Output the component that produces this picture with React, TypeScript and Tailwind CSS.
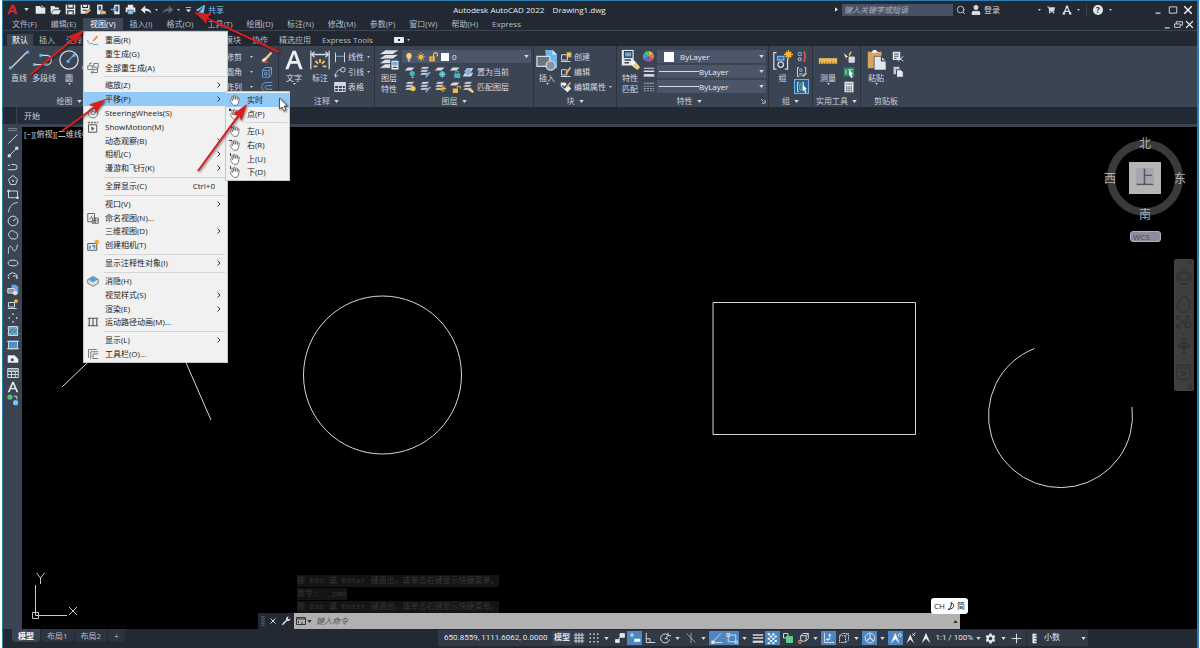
import type { ReactNode } from "react";
import { FaPaperPlane, FaShoppingCart, FaUser } from "react-icons/fa";
import { FiSearch } from "react-icons/fi";
import { IoSettingsSharp } from "react-icons/io5";

type SvgProps = { children: ReactNode; className?: string };

const Small = ({ children, className = "size-[12px]" }: SvgProps) => (
  <svg viewBox="0 0 16 16" className={`${className} shrink-0`} fill="none" stroke="#d5d9e0" strokeWidth="1.3">
    {children}
  </svg>
);

const Big = ({ children }: SvgProps) => (
  <svg viewBox="0 0 24 24" className="size-[22px] shrink-0" fill="none" stroke="#d5d9e0" strokeWidth="1.4">
    {children}
  </svg>
);

const Caret = ({ className = "" }: { className?: string }) => (
  <svg viewBox="0 0 6 4" className={`h-[3px] w-[5px] shrink-0 ${className}`}>
    <path d="M0 0h6L3 4z" fill="#d5d9e0" />
  </svg>
);

const Dot = () => (
  <svg viewBox="0 0 4 3" className="h-[2px] w-[3px] shrink-0">
    <path d="M0 0h4L2 3z" fill="#d5d9e0" />
  </svg>
);

const Layers = ({ children }: { children?: ReactNode }) => (
  <Small>
    <path d="M5 1h9l-3 3H2zM4 5h9l-3 3H1zM4 9h9l-3 3H1z" fill="#d9dce2" stroke="#3b4453" strokeWidth=".6" />
    {children}
  </Small>
);

const Sheet = ({ children }: { children?: ReactNode }) => (
  <Small>
    <path d="M5 2h9l-4 4H1z" fill="#d9dce2" stroke="none" />
    {children}
  </Small>
);

const Bulb = ({ className }: { className?: string }) => (
  <Small className={className}>
    <path d="M8 1a5 5 0 0 0-2.5 9v2h5v-2A5 5 0 0 0 8 1z" fill="#ffd06b" stroke="none" />
    <path d="M6 13.5h4M7 15h2" />
  </Small>
);

const Sun = ({ className }: { className?: string }) => (
  <Small className={className}>
    <circle cx="8" cy="8" r="3.8" fill="#f7b843" stroke="none" />
    <path d="M8 1v14M1 8h14M3 3l10 10M13 3 3 13" stroke="#f7b843" />
  </Small>
);

const Unlock = ({ className }: { className?: string }) => (
  <Small className={className}>
    <path d="M2 7h9v8H2z" fill="#f7b843" stroke="none" />
    <path d="M9 7V4a3 3 0 0 1 6 0v3" stroke="#f7c871" strokeWidth="1.8" />
    <path d="M6.500 9v4" stroke="#3b4453" />
  </Small>
);

const quickTools = [
  {
    label: "新建",
    icon: <path d="M1 3h6l2 2h6v9H1z M8 3l2-1 3 3" fill="#e4e6ea" stroke="none" />,
  },
  {
    label: "打开",
    icon: <path d="M1 3h5l2 2h5v3H5l-3 5H1zM5 9h11l-3 6H2z" fill="#e4e6ea" stroke="none" />,
  },
  {
    label: "保存",
    icon: (
      <>
        <path d="M1 1h14v14H1z" fill="#e4e6ea" stroke="none" />
        <path d="M4 1v5h8V1M4 15v-5h8v5" stroke="#222933" strokeWidth="1.500" />
      </>
    ),
  },
  {
    label: "另存为",
    icon: (
      <>
        <path d="M1 1h13v8l-6 5H1z" fill="#e4e6ea" stroke="none" />
        <path d="M4 1v4h7V1M4 9h6" stroke="#222933" strokeWidth="1.500" />
        <path d="m8 15 1-3 5-5 2 2-5 5z" fill="#f2b65a" stroke="#222933" strokeWidth=".6" />
      </>
    ),
  },
  {
    label: "从移动设备打开",
    icon: (
      <>
        <path d="M3 1h8v14H3z" fill="#e4e6ea" stroke="none" />
        <path d="M5 3h4v6H5z" fill="#4a5468" stroke="none" />
        <path d="M9 9h3l1 1h3v5H8z" fill="#e9b566" stroke="#222933" strokeWidth=".6" />
      </>
    ),
  },
  {
    label: "保存到移动设备",
    icon: (
      <>
        <path d="M6 1h8v14H6z" fill="#e4e6ea" stroke="none" />
        <path d="M8 3h4v8H8z" fill="#4a5468" stroke="none" />
        <path d="M1 8h6M5 5l3 3-3 3" stroke="#5fb4ee" strokeWidth="2" />
      </>
    ),
  },
  {
    label: "打印",
    icon: (
      <>
        <path d="M4 1h8v4H4zM1 5h14v7H1z" fill="#e4e6ea" stroke="none" />
        <path d="M4 9h8v6H4z" fill="#8fc5ef" stroke="#222933" strokeWidth=".8" />
      </>
    ),
  },
];

const menuBar = [
  "文件(F)",
  "编辑(E)",
  "视图(V)",
  "插入(I)",
  "格式(O)",
  "工具(T)",
  "绘图(D)",
  "标注(N)",
  "修改(M)",
  "参数(P)",
  "窗口(W)",
  "帮助(H)",
  "Express",
];

const ribbonTabs = [
  "默认",
  "插入",
  "注释",
  "参数化",
  "视图",
  "管理",
  "输出",
  "附加模块",
  "协作",
  "精选应用",
  "Express Tools",
];

const TitleBar = () => (
  <header className="flex h-[17px] items-center pl-[2px] pr-[2px]">
    <button aria-label="应用程序" className="flex h-full w-[15px] items-center justify-center">
      <svg viewBox="0 0 16 16" className="size-[11px]">
        <path d="M6.500 1h4l5 14h-4l-1-3H5l-1 3H.5zM8 5 6.200 9.500h3.600z" fill="#d8262e" fillRule="evenodd" />
      </svg>
    </button>
    <div className="flex w-[13px] items-center justify-center">
      <Caret />
    </div>
    {quickTools.map((tool) => (
      <button key={tool.label} aria-label={tool.label} className="flex w-[15px] justify-center">
        <Small className="size-[11px]">{tool.icon}</Small>
      </button>
    ))}
    <button aria-label="放弃" className="flex w-[15px] justify-center">
      <Small>
        <path d="M7 2v4c5 0 8 3 8 7-2-3-4-4-8-4v4L1 7.500z" fill="#e4e6ea" stroke="none" />
      </Small>
    </button>
    <div className="flex w-[7px] justify-center">
      <Dot />
    </div>
    <button aria-label="重做" className="flex w-[15px] justify-center">
      <Small>
        <path d="M9 2v4c-5 0-8 3-8 7 2-3 4-4 8-4v4l6-5.500z" fill="#5d6573" stroke="none" />
      </Small>
    </button>
    <div className="flex w-[7px] justify-center">
      <Dot />
    </div>
    <button aria-label="自定义快速访问工具栏" className="flex w-[12px] justify-center">
      <svg viewBox="0 0 8 8" className="size-[7px]">
        <path d="M1 1h6v1H1zM1 4h6L4 7z" fill="#e4e6ea" />
      </svg>
    </button>
    <button className="flex items-center gap-[3px] pl-[2px] text-[#7cc0ee]">
      <FaPaperPlane size={9} />
      共享
    </button>
    <h1 className="flex-1 whitespace-pre text-center text-[#e8eaee]">{"Autodesk AutoCAD 2022    Drawing1.dwg"}</h1>
    <svg viewBox="0 0 4 6" className="mr-[4px] h-[5px] w-[3px]">
      <path d="M0 0v6l4-3z" fill="#e4e6ea" />
    </svg>
    <input
      aria-label="搜索"
      placeholder="键入关键字或短语"
      className="h-[12px] w-[111px] bg-[#4a5166] px-[2px] italic placeholder:text-[#a9afbb]"
    />
    <button aria-label="查找" className="flex w-[16px] justify-center">
      <FiSearch size={10} />
    </button>
    <button className="flex items-center gap-[3px] pl-[2px]">
      <FaUser size={10} />
      登录
    </button>
    <div className="ml-[36px] flex w-[7px] justify-center">
      <Dot />
    </div>
    <button aria-label="购物车" className="flex w-[16px] justify-center">
      <FaShoppingCart size={8} />
    </button>
    <button aria-label="应用商店" className="flex w-[15px] justify-center">
      <Small className="size-[10px]">
        <path d="M8 2 3 13M8 2l5 11M5 10h6" strokeWidth="2" />
        <path d="M1 12h4v3H1zM11 12h4v3h-4zM6 1h4v3H6z" fill="#e4e6ea" stroke="none" />
      </Small>
    </button>
    <div className="flex w-[9px] justify-center">
      <Dot />
    </div>
    <div className="mx-[3px] h-[12px] w-px bg-[#3b4453]" />
    <button aria-label="帮助" className="ml-[3px] flex size-[10px] items-center justify-center rounded-full bg-[#e4e6ea] font-bold text-[#222933]">
      ?
    </button>
    <div className="ml-[3px] flex w-[9px] justify-center">
      <Dot />
    </div>
    <div className="ml-[35px] flex">
      <button aria-label="最小化" className="flex w-[15px] justify-center">
        <Small className="size-[10px]">
          <path d="M4 13h8" strokeWidth="2" />
        </Small>
      </button>
      <button aria-label="最大化" className="flex w-[15px] justify-center">
        <Small className="size-[10px]">
          <path d="M2 3h12v10H2z" strokeWidth="1.500" />
        </Small>
      </button>
      <button aria-label="关闭" className="flex w-[15px] justify-center">
        <Small className="size-[10px]">
          <path d="m2 2 12 12M14 2 2 14" strokeWidth="2.200" stroke="#fff" />
        </Small>
      </button>
    </div>
  </header>
);

const MenuBar = () => (
  <div className="flex h-[13px] items-stretch border-b border-[#3b4453] pl-[2px] pr-[2px] text-[#b9bec8]">
    <nav className="flex">
      {menuBar.map((item) => (
        <button
          key={item}
          className={`flex items-center px-[7px] ${item === "视图(V)" ? "bg-[#3f4959] text-white" : ""}`}
        >
          {item}
        </button>
      ))}
    </nav>
    <div className="ml-auto flex items-center">
      <button aria-label="最小化图形" className="flex w-[11px] justify-center">
        <Small className="size-[9px]">
          <path d="M3 14h9" strokeWidth="2" />
        </Small>
      </button>
      <button aria-label="还原图形" className="flex w-[11px] justify-center">
        <Small className="size-[9px]">
          <path d="M1 7h10v6H1zM4 7V3h11v6h-4" strokeWidth="1.600" />
        </Small>
      </button>
      <button aria-label="关闭图形" className="flex w-[11px] justify-center">
        <Small className="size-[9px]">
          <path d="m2 2 12 12M14 2 2 14" strokeWidth="2.200" stroke="#fff" />
        </Small>
      </button>
    </div>
  </div>
);

const RibbonTabs = () => (
  <div className="flex h-[15px] items-end gap-px pl-[4px] text-[#b9bec8]">
    {ribbonTabs.map((tab, i) => (
      <button
        key={tab}
        className={`flex h-[12px] items-center px-[5px] ${i === 0 ? "bg-[#3b4453] text-white" : ""}`}
      >
        {tab}
      </button>
    ))}
    <button aria-label="最小化功能区" className="ml-[15px] flex h-[12px] items-center gap-[3px]">
      <span className="flex h-[6px] w-[10px] items-center justify-center rounded-[1px] bg-[#e8eaee]">
        <span className="size-[2px] bg-[#222933]" />
      </span>
      <Dot />
    </button>
  </div>
);

type PanelProps = { title: string; width: string; caret?: boolean; corner?: boolean; children: ReactNode };

const Panel = ({ title, width, caret = true, corner, children }: PanelProps) => (
  <section className={`flex shrink-0 flex-col border-r border-[#2b323e] ${width}`}>
    <div className="flex h-[49px] items-start px-[2px] pt-[3px]">{children}</div>
    <footer className="flex h-[12px] items-center text-[#c9cdd5]">
      <span className="flex flex-1 items-center justify-center gap-[4px]">
        {title}
        {caret && <Caret />}
      </span>
      {corner && (
        <svg viewBox="0 0 6 6" className="mr-[2px] size-[5px]">
          <path d="m0 0 3 3M5 1v4H1" stroke="#d5d9e0" fill="none" />
        </svg>
      )}
    </footer>
  </section>
);

type BigButtonProps = { label: string; second?: string; width?: string; caret?: boolean; icon: ReactNode };

const BigButton = ({ label, second, width = "w-[22px]", caret, icon }: BigButtonProps) => (
  <button className={`flex shrink-0 flex-col items-center whitespace-nowrap ${width}`}>
    <Big>{icon}</Big>
    <span className="mt-px leading-[11px]">{label}</span>
    {second && <span className="leading-[11px]">{second}</span>}
    {caret && <Dot />}
  </button>
);

const Row = ({ icon, label, caret }: { icon: ReactNode; label: string; caret?: boolean }) => (
  <button className="flex h-[15px] items-center gap-[2px] whitespace-nowrap">
    {icon}
    {label}
    {caret && (
      <span className="ml-px">
        <Dot />
      </span>
    )}
  </button>
);

const Cell = ({ label, children }: { label: string; children: ReactNode }) => (
  <button aria-label={label} className="flex size-[15px] items-center justify-center">
    {children}
  </button>
);

const modifyRows = [
  {
    label: "修剪",
    icon: (
      <>
        <path d="m5 9 8-8 2 2-7 8z" fill="#f0c48c" stroke="none" />
        <path d="m2 11 3-2 3 2-3 3H1z" fill="#f4f4f4" stroke="none" />
        <path d="M2 15h8" stroke="#e05a48" />
      </>
    ),
  },
  {
    label: "圆角",
    icon: <path d="M2 6h9v9H2zM2 6l3-4h9v9l-3 4M11 6l3-4M5 9h3v3H5z" stroke="#6b9bd0" />,
  },
  {
    label: "阵列",
    icon: <path d="M15 2H7a6 6 0 0 0 0 12h8M15 6H8a2.500 2.500 0 0 0 0 5h7" stroke="#6b9bd0" />,
  },
];

const selectClass = "min-w-0 flex-1 appearance-none bg-transparent text-[#e8eaee] outline-none";

const Ribbon = () => (
  <div className="flex h-[61px] bg-[#3b4453] text-[#d5d9e0]">
    <Panel title="绘图" width="w-[133px]">
      <div className="flex gap-px pl-[3px]">
        <BigButton
          label="直线"
          icon={
            <>
              <path d="M3 21 21 3" />
              <path d="M1 19h3v3H1zM20 2h3v3h-3z" fill="#6fb2ec" stroke="none" />
            </>
          }
        />
        <BigButton
          label="多段线"
          width="w-[26px]"
          icon={
            <>
              <path d="M2 17h13a5 5 0 0 0 0-10H9" />
              <path d="M0 15.500h3v3H0zM13 15.500h3v3h-3zM7 5.500h3v3H7z" fill="#6fb2ec" stroke="none" />
            </>
          }
        />
        <BigButton
          label="圆"
          caret
          icon={
            <>
              <circle cx="12" cy="12" r="10" />
              <path d="m11 13 6-6" stroke="#6fb2ec" />
              <path d="M9.500 12h3v3h-3zM16 5.500h3v3h-3z" fill="#6fb2ec" stroke="none" />
            </>
          }
        />
        <BigButton label="圆弧" caret icon={<path d="M2 22C3 10 10 3 22 2" />} />
      </div>
    </Panel>
    <Panel title="修改" width="w-[143px]">
      <div className="ml-auto flex flex-col pr-[3px]">
        {modifyRows.map((row) => (
          <div key={row.label} className="flex h-[15px] items-center gap-[8px]">
            <button className="flex items-center gap-[8px]">
              {row.label}
              <Dot />
            </button>
            <Small>{row.icon}</Small>
          </div>
        ))}
      </div>
    </Panel>
    <Panel title="注释" width="w-[96px]">
      <BigButton
        label="文字"
        width="w-[26px]"
        caret
        icon={
          <path
            d="M10.500 2h3.500l7.500 20h-3.500l-2.200-6H8.200L6 22H2.500zM12 5.500 9.200 13.200h5.600z"
            fill="#eceef1"
            stroke="none"
            fillRule="evenodd"
          />
        }
      />
      <BigButton
        label="标注"
        width="w-[26px]"
        icon={
          <>
            <path d="M2 2v20M22 2v20M3 6h18M6 3 3 6l3 3M18 3l3 3-3 3" />
            <path d="M12 11v4M7 13l3 3M17 13l-3 3M5 19h4M15 19h4" stroke="#f7c45c" strokeWidth="2" />
          </>
        }
      />
      <div className="ml-px">
        <Row label="线性" caret icon={<Small><path d="M2 2v13M14 2v13" /><path d="M3 7h10" stroke="#6fb2ec" /></Small>} />
        <Row
          label="引线"
          caret
          icon={
            <Small>
              <path d="M2 14C2 8 5 5 9 5M9 5a3 3 0 1 0 6 0 3 3 0 1 0-6 0M1 11l1 4 3-3" />
            </Small>
          }
        />
        <Row
          label="表格"
          icon={
            <Small>
              <path d="M1 2h14v12H1zM1 6h14M1 10h14M6 6v8M11 6v8" />
              <path d="M1 2h14v3H1z" fill="#d5d9e0" />
            </Small>
          }
        />
      </div>
    </Panel>
    <Panel title="图层" width="w-[159px]">
      <BigButton
        label="图层"
        second="特性"
        width="w-[24px]"
        icon={
          <>
            <path d="M8 1h15l-7 5H1zM8 6h15l-7 5H1zM8 11h15l-7 5H1zM8 16h15l-7 5H1z" fill="#dfe2e7" stroke="#3b4453" strokeWidth=".8" />
            <path d="M14 12h9v11h-9z" fill="#f4f5f7" stroke="#3b4453" />
            <path d="M15.500 14h6v4h-6z" fill="#66aeea" stroke="none" />
            <path d="M16 20h5" stroke="#556" />
          </>
        }
      />
      <div className="flex flex-1 flex-col pl-px">
        <div className="mt-px flex h-[13px] items-center bg-[#4b566b] pl-[2px] pr-[2px]">
          <Bulb className="size-[10px]" />
          <Sun className="mx-[2px] size-[10px]" />
          <Unlock className="size-[10px]" />
          <span className="mx-[3px] size-[8px] bg-white" />
          <select aria-label="图层" className={selectClass}>
            <option>0</option>
          </select>
          <Caret />
        </div>
        <div className="mt-px flex h-[15px] items-center whitespace-nowrap">
          <Cell label="关"><Sheet><circle cx="11" cy="10" r="3.500" fill="#3fb7c4" stroke="none" /><path d="M10 15h3" /></Sheet></Cell>
          <Cell label="隔离"><Layers><path d="m9 15 6-7" stroke="#6fb2ec" strokeWidth="2" /></Layers></Cell>
          <Cell label="冻结"><Sheet><circle cx="11" cy="11" r="4" fill="#3fa9c4" stroke="none" /><path d="M11 7v8M7 11h8" stroke="#8fd6e4" /></Sheet></Cell>
          <Cell label="锁定"><Sheet><path d="M7 10h8v6H7z" fill="#3fb7c4" stroke="none" /><path d="M9 10V7h4v3" stroke="#3fb7c4" /></Sheet></Cell>
          <button className="flex items-center gap-[3px]">
            <Small>
              <path d="M6 3h9l-3 5H3zM4 9h11l-3 5H1z" fill="#cfd9e6" stroke="none" />
              <circle cx="8" cy="8" r="4" fill="#7fb2de" stroke="none" />
            </Small>
            置为当前
          </button>
        </div>
        <div className="flex h-[15px] items-center whitespace-nowrap">
          <Cell label="打开所有图层"><Layers><circle cx="12" cy="10" r="3.500" fill="#f7c45c" stroke="none" /></Layers></Cell>
          <Cell label="取消隔离"><Layers><path d="m9 15 6-7" stroke="#6fb2ec" strokeWidth="2" /></Layers></Cell>
          <Cell label="解冻"><Layers><path d="M12 6v9M8 10h8M9 7l6 6M15 7l-6 6" stroke="#f7b843" /></Layers></Cell>
          <Cell label="解锁"><Sheet><path d="M5 10h7v6H5z" fill="#f7b843" stroke="none" /><path d="M11 10V7h4v3" stroke="#f7b843" /></Sheet></Cell>
          <button className="flex items-center gap-[3px]">
            <Layers><path d="m8 12 3-3 5 5-2 2z" fill="#f3d27c" stroke="none" /></Layers>
            匹配图层
          </button>
        </div>
      </div>
    </Panel>
    <Panel title="块" width="w-[83px]">
      <BigButton
        label="插入"
        width="w-[22px]"
        caret
        icon={
          <>
            <path d="M10 1h8l5 5v15H12z" fill="#6fb6ee" stroke="none" />
            <path d="M18 1v5h5" fill="#cfe6fa" stroke="none" />
            <path d="M1 8h14v11H1z" fill="#6d7584" />
            <circle cx="16" cy="18" r="5" fill="#8a92a0" />
          </>
        }
      />
      <div className="ml-[2px]">
        <Row label="创建" icon={<Small><path d="M2 5h8v7H2zM1 14h13" /><path d="M12 1v8M8 5h8M9 2l6 6M15 2 9 8" stroke="#f7c45c" strokeWidth="1.500" /></Small>} />
        <Row label="编辑" icon={<Small><path d="M2 5h7v7H2zM1 14h13" /><path d="m8 10 6-8" stroke="#f0b060" strokeWidth="2.500" /></Small>} />
        <Row
          label="编辑属性"
          caret
          icon={
            <Small>
              <path d="M1 2h6l8 8-5 5-9-8z" fill="#e8eaee" stroke="none" />
              <path d="m3 6 3 3 7-8" stroke="#3b4453" strokeWidth="2" />
              <path d="m9 8 5-6" stroke="#f0b060" strokeWidth="2" />
            </Small>
          }
        />
      </div>
    </Panel>
    <Panel title="特性" width="w-[152px]" corner>
      <BigButton
        label="特性"
        second="匹配"
        width="w-[22px]"
        icon={
          <>
            <path d="M3 1h13v17H3z" fill="#e4e6ea" stroke="none" />
            <path d="M6 3h8v6H6z" fill="#66aeea" stroke="#3b4453" />
            <path d="M6 12h7M6 15h5" stroke="#3b4453" />
            <path d="m12 15 4-3 3 3-4 4z" fill="#f4f5f7" stroke="none" />
            <path d="m15 19 4-4 4 5-3 3z" fill="#f3d27c" stroke="none" />
          </>
        }
      />
      <div className="ml-[2px] flex w-[14px] flex-col">
        <div className="flex h-[15px] items-center">
          <svg viewBox="0 0 16 16" className="size-[11px]">
            <path d="M8 8V0a8 8 0 0 1 7 4z" fill="#e8b93a" />
            <path d="m8 8 7-4a8 8 0 0 1 0 8z" fill="#ef7b34" />
            <path d="m8 8 7 4a8 8 0 0 1-7 4z" fill="#d8418c" />
            <path d="M8 8v8a8 8 0 0 1-7-4z" fill="#7a57d0" />
            <path d="m8 8-7 4a8 8 0 0 1 0-8z" fill="#36a3e0" />
            <path d="M8 8 1 4a8 8 0 0 1 7-4z" fill="#5cc15a" />
          </svg>
        </div>
        <div className="flex h-[15px] items-center">
          <Small><path d="M1 3h14" /><path d="M1 7h14" strokeWidth="2" /><path d="M1 12.500h14" strokeWidth="3.500" /></Small>
        </div>
        <div className="flex h-[15px] items-center">
          <Small><path d="M1 3h14" stroke="#98a0ad" /><path d="M1 7h14M1 10h14M1 13h14" strokeDasharray="3 1" stroke="#98a0ad" /></Small>
        </div>
      </div>
      <div className="flex flex-1 flex-col gap-[2px] pt-px">
        <div className="flex h-[13px] items-center bg-[#4b566b] pl-[7px] pr-[2px]">
          <span className="mr-[6px] size-[10px] bg-white" />
          <select aria-label="颜色" className={selectClass}>
            <option>ByLayer</option>
          </select>
          <Caret />
        </div>
        {["线宽", "线型"].map((name) => (
          <div key={name} className="flex h-[13px] items-center bg-[#4b566b] pl-[2px] pr-[2px]">
            <span className="h-px w-[40px] bg-[#d5d9e0]" />
            <select aria-label={name} className={selectClass}>
              <option>ByLayer</option>
            </select>
            <Caret />
          </div>
        ))}
      </div>
    </Panel>
    <Panel title="组" width="w-[44px]">
      <BigButton
        label="组"
        width="w-[23px]"
        icon={
          <>
            <path d="M5 4H2v18h3M17 10v12h-3" />
            <path d="M6 8h7v4H6z" stroke="#6fb2ec" fill="#3f6d9c" />
            <circle cx="9.500" cy="17" r="3" />
            <circle cx="18" cy="6" r="3" fill="#f7b843" stroke="none" />
            <path d="M18 1v10M13 6h10M15 3l6 6M21 3l-6 6" stroke="#f7b843" />
          </>
        }
      />
      <div className="flex flex-col">
        <Cell label="解除编组"><Small><path d="M3 2h4v4H3z" stroke="#6fb2ec" /><circle cx="5" cy="11" r="2" /><path d="M10 1c3 0 0 6 3 6-3 0 0 7-3 7" stroke="#e05a68" strokeWidth="2" /></Small></Cell>
        <Cell label="组编辑"><Small><path d="M4 2H2v12h2M11 2h2v6" /><path d="M5 4h3v3H5zM5 10h3v3H5z" stroke="#6fb2ec" /><path d="m9 14 5-5" stroke="#f0a860" strokeWidth="2.500" /></Small></Cell>
        <button aria-label="组选择" className="flex size-[15px] items-center justify-center border border-[#6fb2ec] bg-[#2f5f8c]">
          <Small><path d="M4 2H2v12h2M8 2h2v5" /><path d="M5 4h3v8H5z" stroke="#54c78a" /><path d="m9 5 6 6h-3l2 4-2 1-1-4-2 2z" fill="#fff" stroke="none" /></Small>
        </button>
      </div>
    </Panel>
    <Panel title="实用工具" width="w-[48px]">
      <BigButton
        label="测量"
        width="w-[26px]"
        caret
        icon={
          <>
            <path d="M2 10h20v6H2z" fill="#f0bd55" stroke="none" />
            <path d="M4 16v-3M7 16v-2M10 16v-3M13 16v-2M16 16v-3M19 16v-2" stroke="#8a6420" strokeWidth=".8" />
          </>
        }
      />
      <div className="flex flex-col">
        <Cell label="快速选择"><Small><path d="M5 8h4v6h6V8z" fill="#e8eaee" stroke="none" /><path d="m1 3 6 5H4l1 4z" fill="#fff" stroke="none" /><path d="M8 8h7v7H8z" fill="#d5d9e0" /><path d="m8 6 3-5" stroke="#f7b843" strokeWidth="2" /></Small></Cell>
        <Cell label="全部选择"><Small><path d="M1 2h14v12H1z" fill="#2e8d63" stroke="none" /><path d="M4 5v6M7 5h6" /><path d="m8 5 6 6h-3l2 4-2 1-3-5z" fill="#fff" stroke="none" /></Small></Cell>
        <Cell label="计算器"><Small><path d="M2 1h12v14H2z" fill="#e4e6ea" stroke="none" /><path d="M4 4h8M4 8h8M4 10.500h8M4 13h8" stroke="#3b4453" strokeDasharray="2 1" /></Small></Cell>
      </div>
    </Panel>
    <section className="flex w-[50px] shrink-0 flex-col">
      <div className="flex h-[49px] items-start pl-[3px] pt-[3px]">
        <BigButton
          label="粘贴"
          width="w-[24px]"
          caret
          icon={
            <>
              <path d="M3 3h15v18H3z" fill="#d9a55a" stroke="none" />
              <path d="M7 4h7L12 1H9z" fill="#f4f5f7" stroke="none" />
              <path d="M10 8h8l5 5v10H10z" fill="#e4e6ea" stroke="#3b4453" strokeWidth=".8" />
              <path d="M18 8v5h5" stroke="#3b4453" />
            </>
          }
        />
        <div className="ml-[2px] flex flex-col">
          <Cell label="剪切"><Small><path d="M1 1h10v11H1z" fill="#e4e6ea" stroke="none" /><path d="M3 4h6M3 7h6M3 10h3" stroke="#3b4453" /><path d="m8 7 7 7M15 7l-7 7" /></Small></Cell>
          <Cell label="复制"><Small><path d="M2 1h8v10H2z" fill="#c3c8d0" stroke="none" /><path d="M6 5h6l3 3v7H6z" fill="#e8eaee" stroke="#3b4453" /></Small></Cell>
        </div>
      </div>
      <footer className="flex h-[12px] items-center justify-center text-[#c9cdd5]">剪贴板</footer>
    </section>
  </div>
);

const drawTools = [
  { label: "直线", icon: <path d="M2 14 14 2" /> },
  { label: "构造线", icon: <><path d="M2 14 14 2" /><path d="M1 11h4v4H1zM11 1h4v4h-4z" fill="#d5d9e0" stroke="none" /></> },
  { label: "多段线", icon: <path d="M1 13h9a3 3 0 0 0 0-7H6M1 7h3" /> },
  { label: "多边形", icon: <><path d="m8 2 6 5-2.500 7h-7L2 7z" /><circle cx="8" cy="9" r="1" /></> },
  { label: "矩形", icon: <><path d="M2 4h12v9H2z" /><path d="M1 3h2v2H1zM13 12h2v2h-2z" fill="#d5d9e0" /></> },
  { label: "圆弧", icon: <path d="M2 15C3 7 7 3 14 2" /> },
  { label: "圆", icon: <><circle cx="8" cy="8" r="6.500" /><path d="m8 8 4-3" /></> },
  { label: "修订云线", icon: <path d="M3 5a4 4 0 0 1 7-1 4 4 0 0 1 4 5 4 4 0 0 1-6 4 3 3 0 0 1-4-2 4 4 0 0 1-1-6z" /> },
  { label: "样条曲线", icon: <path d="M2 14C1 4 5 2 7 7s5 6 7-5" /> },
  { label: "椭圆", icon: <ellipse cx="8" cy="8" rx="6.500" ry="3.800" /> },
  { label: "椭圆弧", icon: <path d="M3 12a6 5 0 1 1 10-1M8 8h5v4" /> },
  { label: "插入块", icon: <><path d="M6 1h6l3 3v9H6z" fill="#5fa8e6" stroke="none" /><path d="M1 6h9v6H1z" fill="#8a92a0" /><circle cx="11" cy="12" r="2.500" fill="#e4e6ea" /></> },
  { label: "创建块", icon: <><path d="M2 6h8v6H2zM1 14h12" /><circle cx="12" cy="4" r="2.500" fill="#f7b843" stroke="none" /></> },
  { label: "点", icon: <path d="M7 2h2v2H7zM2 7h2v2H2zM12 7h2v2h-2zM7 12h2v2H7z" fill="#d5d9e0" stroke="none" /> },
  { label: "图案填充", icon: <><path d="M2 2h12v12H2z" fill="#4c86a8" /><path d="m2 8 6-6M2 14 14 2M8 14l6-6M0 4h16M0 12h16" stroke="#a8d0e4" strokeWidth=".8" /></> },
  { label: "渐变色", icon: <><path d="M2 3h12v10H2z" fill="#4a8fd0" /><path d="M0 3h16M0 13h16" /></> },
  { label: "面域", icon: <><path d="M1 3h9l5 5v5H1z" fill="#eef0f3" stroke="none" /><circle cx="7" cy="9" r="2" fill="#3b4453" stroke="none" /></> },
  { label: "表格", icon: <path d="M1 2h14v12H1zM1 4h14M1 6h14M1 10h14M6 6v8M11 6v8" /> },
  { label: "多行文字", icon: <path d="M7 1h2l6 14h-2.400l-1.500-4H4.900l-1.500 4H1zM8 4 5.700 9.200h4.600z" fill="#eceef1" stroke="none" fillRule="evenodd" /> },
  { label: "添加选定对象", icon: <><circle cx="4" cy="4" r="3.500" fill="#4fc37e" stroke="none" /><circle cx="11.500" cy="11.500" r="3.500" fill="#7cc4f0" stroke="none" /><path d="M9 3h4v4" /></> },
];

const DrawToolbar = () => (
  <aside className="w-[19px] shrink-0 bg-[#3b4453]">
    <div className="mx-auto mt-px h-[3px] w-[9px] border-y border-[#7a8290]" />
    <div className="mt-px flex h-[275px] flex-col items-center justify-between">
      {drawTools.map((tool) => (
        <button key={tool.label} aria-label={tool.label} className="flex size-[13px] items-center justify-center">
          <Small>{tool.icon}</Small>
        </button>
      ))}
    </div>
  </aside>
);

const NavigationBar = () => (
  <svg viewBox="0 0 20 132" className="h-[132px] w-[20px]" fill="none" stroke="#282828" strokeWidth=".8">
    <rect width="20" height="132" rx="2" fill="#3f3f3f" stroke="none" />
    <path d="m15 2 3 3M18 2l-3 3" />
    <circle cx="10" cy="18" r="7" />
    <path d="M6 14h8v7H6zM9 31h2M9 75h2M9 99h2" />
    <path d="M5 50c-3-4-2-6 0-5l1-5 2-1 1-2 2 1 2 0 1 3 2 1-1 7-3 4H7z" />
    <path d="m3 57 12 12M15 57 3 69M3 61v-4h4M11 57h4v4M3 65v4h4" />
    <circle cx="14" cy="66" r="3" />
    <path d="M10 79v16M3 87h14M8 81l2-2 2 2M8 93l2 2 2-2M5 85l-2 2 2 2M15 85l2 2-2 2" />
    <ellipse cx="10" cy="87" rx="4" ry="3" />
    <path d="M3 106h13v14H3zM3 109h13M8 112v5l4-2.500z" />
    <circle cx="16" cy="128" r="2" />
  </svg>
);

const ViewCube = () => (
  <div className="flex flex-col items-end">
    <svg viewBox="0 0 88 100" className="h-[100px] w-[88px] overflow-visible">
      <circle cx="44" cy="47" r="34" fill="none" stroke="#3a3a3a" strokeWidth="8" />
      <rect x="28" y="31" width="32" height="32" fill="#b5b5b5" />
      <rect x="35" y="37" width="18" height="18" fill="#a6a6ac" />
      <g fill="#b0b0b0" fontSize="12" textAnchor="middle">
        <text x="44" y="17">北</text>
        <text x="44" y="88">南</text>
        <text x="9" y="52">西</text>
        <text x="79" y="52">东</text>
        <text x="44" y="53" fontSize="18" fill="#55555f">上</text>
      </g>
    </svg>
    <button className="mr-[28px] flex h-[11px] w-[31px] items-center rounded-[3px] border border-[#b4b2c0] bg-[#8e8c9a] pl-[2px] text-[#4a4954]">
      WCS
    </button>
  </div>
);

const Drawing = () => (
  <svg className="absolute inset-0 h-full w-full" fill="none" stroke="#d8d8d8" strokeWidth="1">
    <g transform="translate(-22 -127)">
      <path d="M62 387 150 303M150 280l61 140" />
      <circle cx="382.500" cy="375" r="79" />
      <path d="M713 302.500h202.500v132H713z" />
      <path d="M1034.500 348.500A72 72 0 1 0 1132 407" />
    </g>
  </svg>
);

const UcsIcon = () => (
  <svg viewBox="0 0 50 50" className="size-[50px]" fill="none" stroke="#c8c8c8">
    <path d="M5.500 14v30.500H37M2.500 41.500h6v6h-6zM6.500 2l4 5 4-5M10.500 7v6M39 36l8 8M47 36l-8 8" />
  </svg>
);

const history = ["按 Esc 或 Enter 键退出，或单击右键显示快捷菜单。", "命令: '_pan", "按 Esc 或 Enter 键退出，或单击右键显示快捷菜单。"];

const CommandLine = () => (
  <div className="ml-[236px] mr-[237px] flex flex-col">
    <div className="flex flex-col items-start gap-px pl-[39px] font-['Liberation_Mono','Noto_Sans_CJK_SC',monospace] text-[#383838]">
      {history.map((line, i) => (
        <p key={i} className="h-[12px] bg-[#141414] leading-[12px]">
          {line}
        </p>
      ))}
    </div>
    <div className="flex h-[16px]">
      <div className="flex w-[36px] items-center gap-[4px] bg-[#222933] pl-[3px]">
        <svg viewBox="0 0 4 12" className="h-[11px] w-[4px]">
          <path d="M1 0v12M3 0v12" stroke="#8b93a1" strokeDasharray="1 1" />
        </svg>
        <Small className="size-[8px]">
          <path d="m3 3 10 10M13 3 3 13" strokeWidth="2" />
        </Small>
        <Small className="size-[10px]">
          <path d="m2 14 8-8" strokeWidth="2.500" />
          <path d="M15 4l-3 1-1-1 1-3a4 4 0 0 0-4 5l2 2a4 4 0 0 0 5-4z" fill="#d5d9e0" stroke="none" />
        </Small>
      </div>
      <div className="flex flex-1 items-center bg-[#b1b1b1] pl-[2px] pr-[2px]">
        <svg viewBox="0 0 10 8" className="h-[8px] w-[10px]" fill="none" stroke="#333">
          <path d="M.5.5h9v7h-9zM.5 2h9M2 4l1 1-1 1M5 6h2" />
        </svg>
        <svg viewBox="0 0 6 4" className="ml-px h-[3px] w-[5px]">
          <path d="M0 0h6L3 4z" fill="#333" />
        </svg>
        <input
          aria-label="命令"
          placeholder="键入命令"
          className="ml-[4px] min-w-0 flex-1 bg-transparent italic text-[#333] outline-none placeholder:text-[#555]"
        />
        <svg viewBox="0 0 6 4" className="h-[3px] w-[5px]">
          <path d="M0 4h6L3 0z" fill="#333" />
        </svg>
      </div>
    </div>
  </div>
);

const Canvas = () => (
  <main className="relative flex min-w-0 flex-1 flex-col justify-between overflow-hidden bg-black text-[#d8d8d8]">
    <Drawing />
    <p className="relative pl-[2px] pt-px leading-[12px]">[−][俯视][二维线框]</p>
    <div className="relative">
      <CommandLine />
    </div>
    <div className="absolute right-[8px] top-[4px]">
      <ViewCube />
    </div>
    <div className="absolute right-[3px] top-[132px]">
      <NavigationBar />
    </div>
    <div className="absolute bottom-[8px] left-[8px]">
      <UcsIcon />
    </div>
    <div className="absolute bottom-[15px] right-[229px] flex h-[16px] w-[37px] items-center justify-center gap-[2px] rounded-[3px] bg-white text-[#222]">
      CH
      <svg viewBox="0 0 8 8" className="size-[8px] shrink-0" fill="none" stroke="#222">
        <path d="M4 .5c4 2 4 6-3 7 2-1 4-3 3-7z" />
      </svg>
      简
    </div>
  </main>
);

type StatusItem = { label: string; on?: boolean; icon?: ReactNode };

const caretItem: StatusItem = { label: "caret" };

const statusItems: StatusItem[] = [
  { label: "栅格", icon: <path d="M4 1v14M8 1v14M12 1v14M1 4h14M1 8h14M1 12h14" /> },
  { label: "捕捉", icon: <path d="M2 3h12M2 8h12M2 13h12" strokeWidth="2" strokeDasharray="2 3" /> },
  caretItem,
  { label: "推断约束", icon: <path d="M8 2h6v5H8zM2 10h5v4H2zM7 7v3" fill="#e4e6ea" /> },
  { label: "动态输入", on: true, icon: <><path d="M1 4h6M4 1v6" strokeWidth="1.600" /><path d="M7 9h8v4H7z" fill="#fff" stroke="none" /></> },
  { label: "正交", icon: <path d="M3 1v13h12M3 9h5v5" /> },
  { label: "极轴", icon: <path d="M13 5a6 6 0 1 0 1 5M8 9l5-5M8 9h4M12 1v4h4" /> },
  caretItem,
  { label: "等轴测", icon: <path d="m2 2 12 12M8 1v14" stroke="#98a0ad" /> },
  caretItem,
  { label: "对象捕捉追踪", on: true, icon: <><path d="M2 14 13 2M2 14h13" /><path d="M1 12h3v3H1z" fill="#fff" /></> },
  { label: "对象捕捉", on: true, icon: <><path d="M3 4h10v9H3z" /><path d="M1 2h4v4H1zM12 12h3v3h-3z" /></> },
  caretItem,
  { label: "线宽", icon: <><path d="M1 4h14M1 8h14" strokeWidth="1.800" /><path d="M1 13h14" strokeWidth="3" /></> },
  { label: "透明度", on: true, icon: <path d="M1 3h12M4 6h12M1 9h12M4 12h12M1 15h12" strokeWidth="2.800" strokeDasharray="3 3" stroke="#f0f4f8" /> },
  { label: "选择循环", icon: <><path d="M2 2h6v6H2z" /><path d="M6 6h8v8H6z" fill="#5fd08c" stroke="#5fd08c" /></> },
  { label: "三维对象捕捉", icon: <><path d="M5 5h7v7H5zM5 5l3-3h7v7l-3 3M12 5l3-3" /><circle cx="4" cy="13" r="2" stroke="#f0b27a" /></> },
  caretItem,
  { label: "动态 UCS", on: true, icon: <><path d="M2 1v13h13M9 3v7H5" /><path d="m7 12-3-2 3-2zM7 5l2-3 2 3z" fill="#fff" stroke="none" /></> },
  { label: "选择过滤", icon: <path d="M2 5h8v9H2zM2 5l4-3h8v9l-4 3M10 5l4-3" strokeDasharray="2 1" /> },
  caretItem,
  { label: "小控件", on: true, icon: <><circle cx="8" cy="8" r="6.500" /><path d="M8 2v6l-5 4M8 8l5 4" strokeWidth="1.700" /></> },
  caretItem,
  { label: "注释可见性", on: true, icon: <><path d="m7 2 5 12-5-5-5 5z" fill="#fff" /><circle cx="13" cy="4" r="2" /></> },
  { label: "自动缩放", icon: <><path d="m7 3 5 12-5-5-5 5z" fill="#e4e6ea" stroke="none" /><path d="m10 5 4-4M10 2l3 3" stroke="#e4e6ea" /></> },
  { label: "注释比例", icon: <path d="m8 1 6 14-6-6-6 6z" fill="#e4e6ea" stroke="none" /> },
];

const StatusBar = () => (
  <div className="ml-auto mr-[109px] mt-px flex h-[16px] items-center bg-[#313947] font-['Roboto','Noto_Sans_CJK_SC',sans-serif] text-[#e0e3e8]">
    <span className="w-[114px] whitespace-nowrap pr-[5px] text-right">650.8559, 1111.6062, 0.0000</span>
    <button className="w-[19px] bg-[#3b4453] font-bold leading-[14px]">模型</button>
    {statusItems.map((item, i) =>
      item.icon ? (
        <button
          key={i}
          aria-label={item.label}
          className={`flex h-[14px] w-[15px] items-center justify-center ${item.on ? "bg-[#4d86c0]" : ""}`}
        >
          <Small className="size-[12px]">{item.icon}</Small>
        </button>
      ) : (
        <span key={i} className="flex w-[11px] justify-center">
          <Caret />
        </span>
      )
    )}
    <button className="flex items-center gap-[3px] whitespace-nowrap px-[2px]">
      1:1 / 100%
      <Caret />
    </button>
    <button aria-label="切换工作空间" className="flex w-[15px] justify-center">
      <IoSettingsSharp size={11} />
    </button>
    <span className="flex w-[11px] justify-center">
      <Caret />
    </span>
    <button aria-label="注释监视器" className="flex w-[15px] justify-center">
      <Small className="size-[11px]">
        <path d="M8 1v14M1 8h14" strokeWidth="1.600" />
      </Small>
    </button>
    <button className="ml-[2px] flex h-[14px] w-[62px] items-center gap-[4px] border-l border-[#222933] pl-[2px] pr-[2px]">
      <Small className="size-[11px]">
        <path d="M5 1h6v14H5z" fill="#e4e6ea" stroke="none" />
        <path d="M8 4h3M8 8h3M8 12h3" stroke="#313947" />
      </Small>
      小数
      <Caret className="ml-auto" />
    </button>
  </div>
);

const Bottom = () => (
  <footer className="flex h-[19px] bg-[#222933]">
    <nav className="flex items-start gap-px pl-[9px] text-[#b9bec8]">
      <button className="h-[13px] rounded-b-[4px] bg-[#3b4453] px-[6px] font-bold leading-[13px] text-white">模型</button>
      <button className="h-[13px] rounded-b-[4px] bg-[#2c3441] px-[6px] leading-[13px]">布局1</button>
      <button className="h-[13px] rounded-b-[4px] bg-[#2c3441] px-[6px] leading-[13px]">布局2</button>
      <button className="h-[13px] rounded-b-[4px] bg-[#2c3441] px-[6px] leading-[13px]">+</button>
    </nav>
    <StatusBar />
  </footer>
);

type MenuEntry = { label: string; more?: boolean; key?: string; icon?: ReactNode; on?: boolean } | null;

const viewMenu: MenuEntry[] = [
  { label: "重画(R)", icon: <><path d="m7 9 6-7 2 2-6 6z" fill="#e79a4a" stroke="none" /><path d="M1 8c0 5 3 6 7 4M8 14h7" stroke="#6aa0d0" /></> },
  { label: "重生成(G)" },
  { label: "全部重生成(A)", icon: <><path d="M1 5h6v5H1zM9 2h6v5H9zM8 10h6v4H8z" stroke="#777" /><path d="m3 3 3-2M5 13l3 2M14 8v2" stroke="#3fa36a" strokeWidth="2" /></> },
  null,
  { label: "缩放(Z)", more: true },
  { label: "平移(P)", more: true, on: true },
  { label: "SteeringWheels(S)", icon: <><circle cx="8" cy="8" r="6.500" stroke="#777" /><circle cx="8" cy="8" r="2.500" stroke="#777" /></> },
  { label: "ShowMotion(M)", icon: <><path d="M2 5h11v10H2z" stroke="#555" /><path d="M6 7v6l4-3z" fill="#555" stroke="none" /><path d="M1 2h14" stroke="#777" strokeWidth="2" strokeDasharray="3 1" /></> },
  { label: "动态观察(B)", more: true },
  { label: "相机(C)", more: true },
  { label: "漫游和飞行(K)", more: true },
  null,
  { label: "全屏显示(C)", key: "Ctrl+0" },
  null,
  { label: "视口(V)", more: true },
  { label: "命名视图(N)...", icon: <path d="M1 2h9v11H1zM3 10l4-5M7 8h8v7H7zM7 11h8M11 8v7" stroke="#666" /> },
  { label: "三维视图(D)", more: true },
  { label: "创建相机(T)", icon: <><path d="M1 6h12v9H1z" stroke="#555" /><path d="M4 9v4M7 9h3v4" stroke="#3c7fc0" strokeWidth="2" /><circle cx="13" cy="4" r="3" fill="#f5a623" stroke="none" /></> },
  null,
  { label: "显示注释性对象(I)", more: true },
  null,
  { label: "消隐(H)", icon: <><path d="m1 6 7-4 7 4v5l-7 4-7-4z" fill="#dfe4ea" stroke="#777" /><path d="m2 6 6-4 6 4-6 4z" fill="#4fa3dc" stroke="none" /></> },
  { label: "视觉样式(S)", more: true },
  { label: "渲染(E)", more: true },
  { label: "运动路径动画(M)...", icon: <path d="M1 3h14M1 13h14M3 3v10M13 3v10M8 3v10" stroke="#555" strokeWidth="1.500" /> },
  null,
  { label: "显示(L)", more: true },
  { label: "工具栏(O)...", icon: <path d="M2 13V2h11M5 15V5h10M8 14V8h7M8 14h7" stroke="#777" /> },
];

const Hand = () => (
  <path
    d="M5 14C3 11 1 9 2 8s2 0 3 1L3.500 4C4 2.500 5 3 5.500 4L6.500 7 6 2.500C6.500 1 8 1.500 8 3l.5 4L9.500 3c.5-1 2-.5 1.500 1v3.500L12.500 5c1-.5 1.500.5 1 1.500L12.500 12 11 15H6z"
    fill="#fff"
    stroke="#555"
    strokeWidth="1"
  />
);

const panMenu: MenuEntry[] = [
  { label: "实时", on: true, icon: <Hand /> },
  { label: "点(P)", icon: <><Hand /><path d="M0 1h3v3H0z" fill="#333" stroke="none" /></> },
  null,
  { label: "左(L)", icon: <><Hand /><path d="M0 3h4" stroke="#333" /></> },
  { label: "右(R)", icon: <><Hand /><path d="M0 2h4" stroke="#333" /></> },
  { label: "上(U)", icon: <><Hand /><path d="M2 0v4" stroke="#333" /></> },
  { label: "下(D)", icon: <><Hand /><path d="M2 0v4" stroke="#333" /></> },
];

const Menu = ({ items, className }: { items: MenuEntry[]; className: string }) => (
  <ul role="menu" className={`absolute flex flex-col border border-[#c4c6ca] bg-[#f1f1f1] py-px text-[#222] ${className}`}>
    {items.map((item, i) =>
      item ? (
        <li key={i} role="none" className="flex flex-1">
          <button role="menuitem" className={`flex flex-1 items-center whitespace-nowrap pr-[6px] ${item.on ? "bg-[#91c9f7]" : ""}`}>
            <span className="flex w-[17px] items-center justify-center">
              {item.icon && <Small>{item.icon}</Small>}
            </span>
            <span className="pl-[4px]">{item.label}</span>
            {item.key && <span className="ml-auto pr-[6px]">{item.key}</span>}
            {item.more && (
              <svg viewBox="0 0 4 6" className="ml-auto h-[6px] w-[4px]" fill="none" stroke="#333">
                <path d="m.5.5 2.500 2.500L.5 5.500" />
              </svg>
            )}
          </button>
        </li>
      ) : (
        <li key={i} role="separator" className="mb-px ml-[20px] mr-[2px] mt-[2px] h-px bg-[#d4d4d4]" />
      )
    )}
  </ul>
);

const arrows = [
  { from: [30, 75], to: [84, 30] },
  { from: [279, 52], to: [194, 12] },
  { from: [62, 131], to: [106, 99] },
  { from: [198, 171], to: [247, 104] },
];

const Arrows = () => (
  <svg className="pointer-events-none absolute left-0 top-0 h-[200px] w-[320px] drop-shadow-[1px_1px_1px_rgba(0,0,0,0.5)]">
    {arrows.map(({ from, to }, i) => {
      const dx = to[0] - from[0];
      const dy = to[1] - from[1];
      const length = Math.hypot(dx, dy);
      const angle = (Math.atan2(dy, dx) * 180) / Math.PI;
      return (
        <g key={i} transform={`translate(${from[0]} ${from[1]}) rotate(${angle})`} fill="#d81e1e">
          <rect y="-1" width={length - 12} height="2" />
          <path d={`M${length} 0l-17 5.500 3-5.500-3-5.500z`} />
        </g>
      );
    })}
    <path d="M279.500 98v11l2.500-2 2 4 2-1-2-4h3.500z" fill="#fff" stroke="#333" strokeWidth=".8" />
  </svg>
);

export default function App() {
  return (
    <div className="relative flex h-screen bg-white pl-[2px] pr-px font-['Open_Sans','Noto_Sans_CJK_SC',sans-serif] text-[8px] leading-[12px] text-[#d5d9e0]">
      <div className="flex min-w-0 flex-1 flex-col border-l border-r-2 border-t border-[#2b7fae] bg-[#222933]">
        <TitleBar />
        <MenuBar />
        <RibbonTabs />
        <Ribbon />
        <div className="flex h-[20px] items-center border-b-[3px] border-[#3b4453] text-[#c9cdd5]">
          <button className="ml-[13px] flex h-full items-center border-l border-[#3b4453] bg-[#262d38] pl-[7px] pr-[60px]">开始</button>
        </div>
        <div className="flex min-h-0 flex-1">
          <DrawToolbar />
          <Canvas />
        </div>
        <Bottom />
      </div>
      <Menu items={viewMenu} className="left-[83px] top-[31px] h-[332px] w-[145px]" />
      <Menu items={panMenu} className="left-[225px] top-[91px] h-[90px] w-[65px]" />
      <Arrows />
    </div>
  );
}
